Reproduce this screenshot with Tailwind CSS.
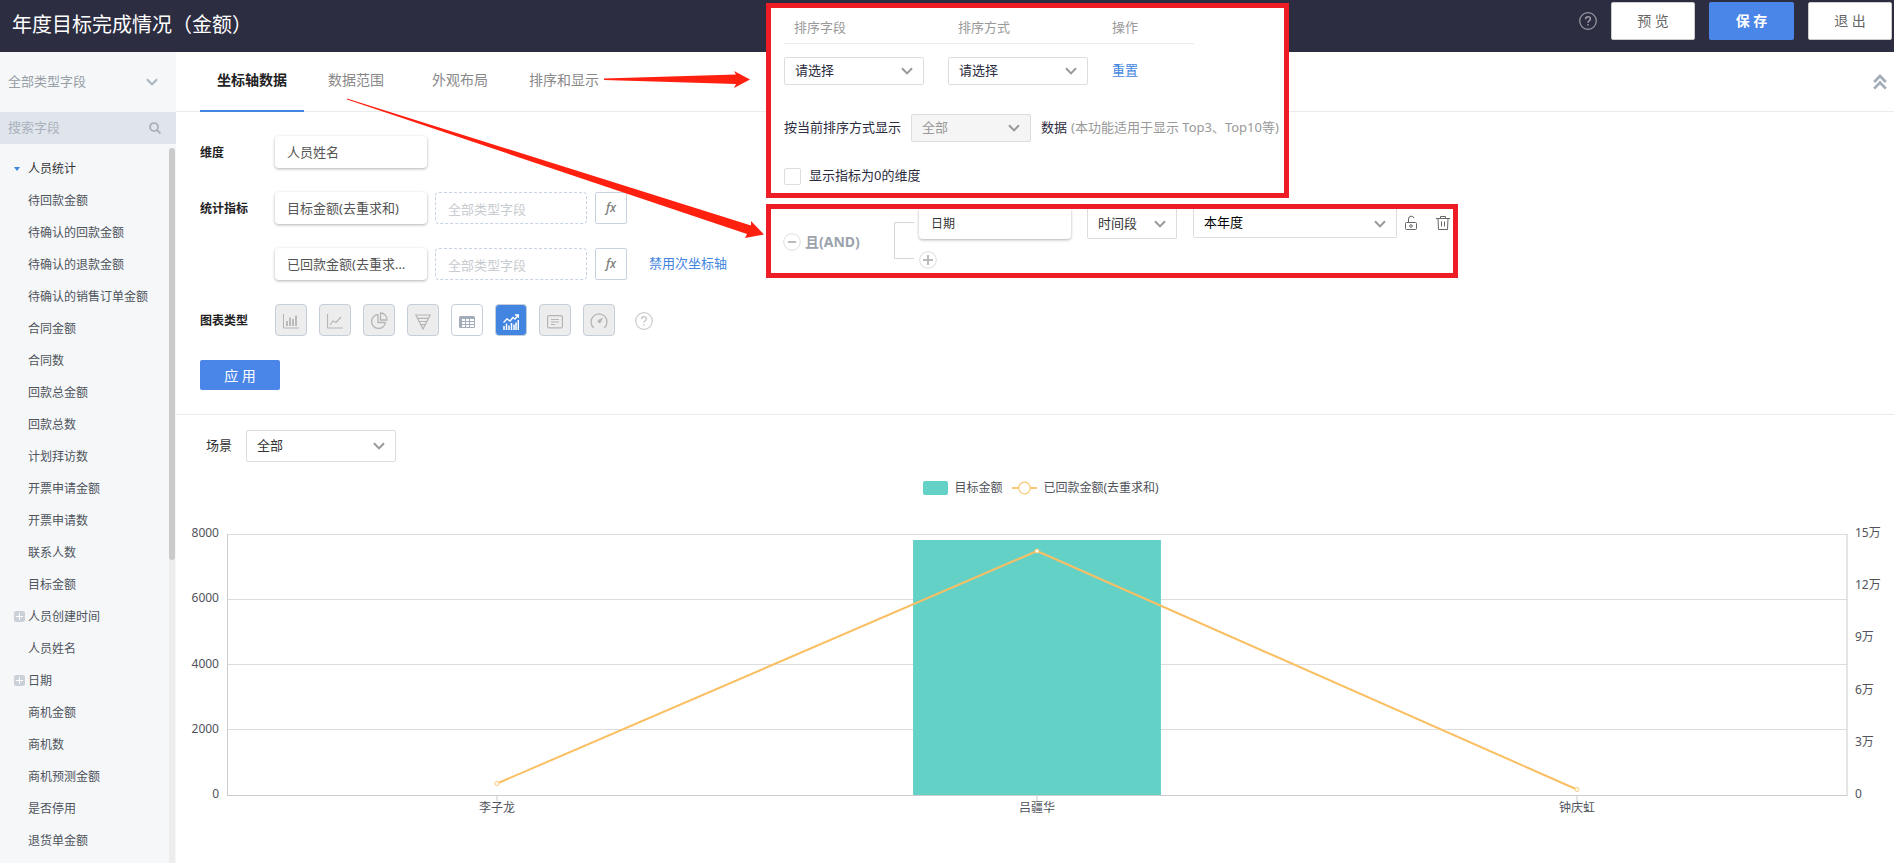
<!DOCTYPE html>
<html lang="zh-CN">
<head>
<meta charset="utf-8">
<title>年度目标完成情况（金额）</title>
<script src="https://cdn.jsdelivr.net/npm/@tailwindcss/browser@4"></script>
</head>
<body class="relative min-h-screen flex flex-col bg-white text-[#333] text-[13px] font-['Noto_Sans','Noto_Sans_CJK_SC',sans-serif]">
<svg class="hidden">
  <symbol id="chev" viewBox="0 0 12 8"><path d="M1 1.2 6 6.4 11 1.2" fill="none" stroke="currentColor" stroke-width="2"/></symbol>
  <symbol id="help" viewBox="0 0 18 18"><circle cx="9" cy="9" r="8.3" fill="none" stroke="currentColor" stroke-width="1.2"/><path d="M6.6 7.2C6.6 5.6 7.6 4.8 9 4.8s2.4.8 2.4 2.1c0 1.7-2.4 1.8-2.4 3.9M9 12v1.6" fill="none" stroke="currentColor" stroke-width="1.5"/></symbol>
</svg>

<header class="h-[52px] shrink-0 bg-[#2d2d41] flex items-start justify-between pl-3 pr-0.5">
  <h1 class="text-white text-xl leading-[48px]">年度目标完成情况<span lang="zh-TW" class="font-['Noto_Sans_CJK_TC',sans-serif]">（</span>金额<span lang="zh-TW" class="font-['Noto_Sans_CJK_TC',sans-serif]">）</span></h1>
  <div class="flex items-center pt-0.5 text-sm">
    <button aria-label="帮助" class="mr-3.5 text-[#9b9ba6]"><svg class="size-[18px]"><use href="#help"/></svg></button>
    <button class="w-[84px] h-[38px] rounded-xs bg-white border border-[#ccc] text-[#666] mr-3.5">预 览</button>
    <button class="w-[85px] h-[38px] rounded-xs bg-[#4a85e8] text-white font-bold mr-3.5">保 存</button>
    <button class="w-[84px] h-[38px] rounded-xs bg-white border border-[#ccc] text-[#666]">退 出</button>
  </div>
</header>

<div class="flex grow">
  <aside class="w-44 shrink-0 bg-[#f5f7f9] flex flex-col">
    <div class="relative h-[60px] flex items-center">
      <select aria-label="字段类型" class="appearance-none w-full h-full px-2 text-[#989ea6] bg-transparent"><option>全部类型字段</option></select>
      <svg class="absolute right-[18px] w-3 h-2 text-[#a9b2bb] pointer-events-none"><use href="#chev"/></svg>
    </div>
    <label class="h-8 bg-[#e0e5ec] flex items-center pl-2 pr-[15px]">
      <input type="search" aria-label="搜索字段" placeholder="搜索字段" class="min-w-0 grow bg-transparent placeholder:text-[#a9b2bd] outline-none">
      <svg class="size-3 shrink-0 text-[#a3aeb9]" viewBox="0 0 12 12"><circle cx="5" cy="5" r="4" fill="none" stroke="currentColor" stroke-width="1.7"/><path d="m8 8 3.4 3.4" stroke="currentColor" stroke-width="1.8"/></svg>
    </label>
    <div class="flex grow pt-1">
      <ul class="grow pt-[5px] text-xs leading-8 text-[#4f545c]">
        <li class="flex items-center pl-3.5 text-[#333]"><svg class="w-1.5 h-1 mr-2" viewBox="0 0 6 4"><path d="M0 0h6L3 4z" fill="#3d86e0"/></svg>人员统计</li>
        <li class="pl-7">待回款金额</li>
        <li class="pl-7">待确认的回款金额</li>
        <li class="pl-7">待确认的退款金额</li>
        <li class="pl-7">待确认的销售订单金额</li>
        <li class="pl-7">合同金额</li>
        <li class="pl-7">合同数</li>
        <li class="pl-7">回款总金额</li>
        <li class="pl-7">回款总数</li>
        <li class="pl-7">计划拜访数</li>
        <li class="pl-7">开票申请金额</li>
        <li class="pl-7">开票申请数</li>
        <li class="pl-7">联系人数</li>
        <li class="pl-7">目标金额</li>
        <li class="flex items-center pl-3.5"><svg class="size-[11px] mr-[3px] mb-px" viewBox="0 0 11 11"><rect width="11" height="11" rx="2" fill="#ccd1d9"/><path d="M2 5.5h7M5.5 2v7" stroke="#fff"/></svg>人员创建时间</li>
        <li class="pl-7">人员姓名</li>
        <li class="flex items-center pl-3.5"><svg class="size-[11px] mr-[3px] mb-px" viewBox="0 0 11 11"><rect width="11" height="11" rx="2" fill="#ccd1d9"/><path d="M2 5.5h7M5.5 2v7" stroke="#fff"/></svg>日期</li>
        <li class="pl-7">商机金额</li>
        <li class="pl-7">商机数</li>
        <li class="pl-7">商机预测金额</li>
        <li class="pl-7">是否停用</li>
        <li class="pl-7">退货单金额</li>
      </ul>
      <div class="w-1.5 mr-px bg-[#ededed] rounded-t-full"><div class="h-[412px] bg-[#cbcbcb] rounded-full"></div></div>
    </div>
  </aside>

  <main class="grow min-w-0 flex flex-col">
    <nav class="h-[60px] border-b border-[#ebebeb] flex items-start pl-6 pr-[7px] text-sm leading-[56px] text-center text-[#888]">
      <a href="#" class="w-[104px] h-[60px] border-b-2 border-[#4285e0] font-bold text-[#222]">坐标轴数据</a>
      <a href="#" class="w-[104px]">数据范围</a>
      <a href="#" class="w-[104px]">外观布局</a>
      <a href="#" class="w-[104px]">排序和显示</a>
      <button aria-label="收起" class="ml-auto h-[60px] text-[#a3adb8]"><svg class="w-3.5 h-4" viewBox="0 0 14 16"><path d="m1.2 8 5.8-6 5.8 6M1.2 14.6l5.8-6 5.8 6" fill="none" stroke="currentColor" stroke-width="2.8"/></svg></button>
    </nav>

    <section class="px-6 py-6 border-b border-[#ebebeb] flex flex-col gap-6">
      <div class="flex items-center h-8">
        <span class="w-[75px] pt-0.5 text-xs font-bold text-[#222]">维度</span>
        <div class="w-[152px] h-8 leading-8 px-3 rounded-sm bg-white text-[#555] shadow-[0_1px_3px_rgba(60,60,80,0.4)]">人员姓名</div>
      </div>
      <div class="flex items-center h-8 gap-2">
        <span class="w-[67px] pt-0.5 text-xs font-bold text-[#222]">统计指标</span>
        <div class="w-[152px] h-8 leading-8 px-3 rounded-sm bg-white text-[#555] truncate shadow-[0_1px_3px_rgba(60,60,80,0.4)]">目标金额(去重求和)</div>
        <div class="w-[152px] h-8 leading-8 px-3 rounded-sm border border-dashed border-[#c8d3e2] text-[#c8cbd0]">全部类型字段</div>
        <button class="size-8 rounded-xs border border-[#c8d3e2] text-[#777] text-xs italic font-medium leading-none font-['Noto_Sans',sans-serif]">fx</button>
      </div>
      <div class="flex items-center h-8 gap-2">
        <span class="w-[67px]"></span>
        <div class="w-[152px] h-8 leading-8 pl-3 pr-5 rounded-sm bg-white text-[#555] truncate shadow-[0_1px_3px_rgba(60,60,80,0.4)]">已回款金额(去重求和)</div>
        <div class="w-[152px] h-8 leading-8 px-3 rounded-sm border border-dashed border-[#c8d3e2] text-[#c8cbd0]">全部类型字段</div>
        <button class="size-8 rounded-xs border border-[#c8d3e2] text-[#777] text-xs italic font-medium leading-none font-['Noto_Sans',sans-serif]">fx</button>
        <a href="#" class="ml-3.5 text-[#4285e0]">禁用次坐标轴</a>
      </div>
      <div class="flex items-center h-8">
        <span class="w-[75px] pt-0.5 text-xs font-bold text-[#222]">图表类型</span>
        <div class="flex gap-3 text-[#b5b5b5] [&>button]:size-8 [&>button]:rounded-sm [&>button]:border [&>button]:border-[#c5ced9] [&>button]:flex [&>button]:items-center [&>button]:justify-center">
          <button aria-label="柱状图" class="bg-[#ededed]"><svg class="size-4 mt-0.5" viewBox="0 0 16 16"><path d="M.5 1v14H16" fill="none" stroke="currentColor"/><path d="M4 8v5M7 4.500v8.500M10 6v7M13 2.500V13" stroke="currentColor" stroke-width="1.800"/></svg></button>
          <button aria-label="折线图" class="bg-[#ededed]"><svg class="size-4 mt-0.5" viewBox="0 0 16 16"><path d="M.5 1v14H16M3 12l3-4 3 1.500L14 4" fill="none" stroke="currentColor" stroke-width="1.200"/></svg></button>
          <button aria-label="饼图" class="bg-[#ededed]"><svg class="size-[18px] mt-0.5" viewBox="0 0 18 18"><path d="M8 2.500a7 7 0 1 0 7.500 8M8 2.500v8h7.500M10.500 1v7H17a6.500 6.500 0 0 0-6.500-7z" fill="none" stroke="currentColor" stroke-width="1.300"/></svg></button>
          <button aria-label="漏斗图" class="bg-[#ededed]"><svg class="size-4 mt-1" viewBox="0 0 16 16"><path d="M.8 1h14.400L8 15zM2.500 4.300h11M4.200 7.500h7.600M6 10.700h4" fill="none" stroke="currentColor" stroke-width="1.200"/></svg></button>
          <button aria-label="表格" class="bg-white"><svg class="w-4 h-3 mt-1" viewBox="0 0 16 12"><rect width="16" height="12" rx="1.500" fill="#a3adba"/><path d="M3 3h3v2H3zM7 3h3v2H7zM11 3h4v2h-4zM3 6h3v2H3zM7 6h3v2H7zM11 6h4v2h-4zM3 9h3v2H3zM7 9h3v2H7zM11 9h4v2h-4z" fill="#fff"/></svg></button>
          <button aria-label="双轴图" class="bg-[#4285e0] text-white"><svg class="size-4 mt-1" viewBox="0 0 16 16"><path d="M.5 8.500 4 5l3 2 3-3.500 2 1.500 3-3.500M12 1h3.500v3" fill="none" stroke="currentColor" stroke-width="1.400"/><path d="M1 12v4M3.500 9.500V16M6 11.500V16M8.500 9V16M11 10.500V16M13 8.500V16M15.300 6V16" stroke="currentColor" stroke-width="1.500"/></svg></button>
          <button aria-label="数值图" class="bg-[#ededed]"><svg class="w-4 h-3.5 mt-1" viewBox="0 0 16 14"><rect x=".6" y=".6" width="14.800" height="12.300" rx="1.500" fill="none" stroke="currentColor" stroke-width="1.200"/><path d="M4 4.500h8M4 7h8M4 9.500h4" stroke="currentColor"/></svg></button>
          <button aria-label="仪表盘" class="bg-[#ededed]"><svg class="size-[18px] mt-0.5" viewBox="0 0 18 18"><path d="M3.800 16a8 8 0 1 1 10.400 0" fill="none" stroke="currentColor" stroke-width="1.300"/><path d="m13 5.500-2.200 5a1.800 1.800 0 0 1-2.600-2.600z" fill="currentColor"/></svg></button>
        </div>
        <button aria-label="帮助" class="ml-5 pt-0.5 text-[#ccc]"><svg class="size-[18px]"><use href="#help"/></svg></button>
      </div>
      <button class="w-20 h-[30px] pt-0.5 rounded-xs bg-[#4a85e8] text-white text-sm">应 用</button>
    </section>

    <section class="pt-[15px] pb-4">
      <div class="flex items-center pl-[30px]">
        <label for="scene">场景</label>
        <div class="relative ml-3.5 flex items-center">
          <select id="scene" class="appearance-none w-[150px] h-8 pl-2.5 border border-[#ddd] rounded-xs bg-white text-[#333]"><option>全部</option></select>
          <svg class="absolute right-[11px] w-3 h-2 text-[#999] pointer-events-none"><use href="#chev"/></svg>
        </div>
      </div>
      <div class="flex justify-center items-center mt-[18px] h-4 pl-3 text-xs text-[#50535c]">
        <span class="w-[25px] h-3.5 rounded-xs bg-[#64d1c7] mr-1.5"></span>目标金额
        <svg class="w-[25px] h-3.5 ml-2.5 mr-1.5" viewBox="0 0 25 14"><path d="M0 7h25" stroke="#fac976" stroke-width="2"/><circle cx="12.500" cy="7" r="5.800" fill="#fff" stroke="#fac976" stroke-width="1.300"/></svg>已回款金额(去重求和)
      </div>
      <div class="mt-[38px] pl-[51px] pr-[47px]">
        <svg class="block w-full h-[290px] overflow-visible text-xs fill-[#50535c]" role="img" aria-label="目标金额与已回款金额">
          <g stroke="#ddd"><line x1="0" x2="100%" y1=".5" y2=".5"/><line x1="0" x2="100%" y1="65.500" y2="65.500"/><line x1="0" x2="100%" y1="130.500" y2="130.500"/><line x1="0" x2="100%" y1="195.500" y2="195.500"/></g>
          <rect x="42.350%" width="15.300%" y="6" height="255" fill="#64d1c7"/>
          <g stroke="#ccc"><line x1=".5" x2=".5" y1="0" y2="262"/><line x1="100%" x2="100%" y1="0" y2="262"/><line x1="0" x2="100%" y1="261.500" y2="261.500"/><line x1="16.667%" x2="16.667%" y1="262" y2="267"/><line x1="50%" x2="50%" y1="262" y2="267"/><line x1="83.333%" x2="83.333%" y1="262" y2="267"/></g>
          <g stroke="#f9bf62" stroke-width="2"><line x1="16.667%" y1="249.500" x2="50%" y2="17"/><line x1="50%" y1="17" x2="83.333%" y2="255.500"/></g>
          <g stroke="#fac976" fill="#fff"><circle cx="16.667%" cy="249.500" r="2"/><circle cx="50%" cy="17" r="2"/><circle cx="83.333%" cy="255.500" r="2"/></g>
          <g text-anchor="end"><text x="-8" y="3">8000</text><text x="-8" y="68">6000</text><text x="-8" y="134">4000</text><text x="-8" y="199">2000</text><text x="-8" y="264">0</text></g>
          <svg x="100%" class="overflow-visible"><text x="8" y="3">15万</text><text x="8" y="55">12万</text><text x="8" y="107">9万</text><text x="8" y="160">6万</text><text x="8" y="212">3万</text><text x="8" y="264">0</text></svg>
          <g text-anchor="middle"><text x="16.667%" y="278">李子龙</text><text x="50%" y="278">吕疆华</text><text x="83.333%" y="278">钟庆虹</text></g>
        </svg>
      </div>
    </section>
  </main>
</div>

<!-- Callout: sorting tab -->
<div class="absolute left-[766px] top-[3px] w-[523px] h-[195px] border-[5px] border-[#ee1c25] bg-white pl-[13px] text-[#2b2b40]">
  <div class="w-[410px] h-9 border-b border-[#ebebeb] grid grid-cols-[164px_164px_1fr] items-center pt-1 text-[#999]"><span class="pl-2.5">排序字段</span><span class="pl-2.5">排序方式</span><span>操作</span></div>
  <div class="w-[410px] mt-[13px] grid grid-cols-[164px_164px_1fr] items-center">
    <div class="relative w-[140px] flex items-center">
      <select aria-label="排序字段" class="appearance-none w-full h-7 pl-2.5 border border-[#ddd] rounded-xs bg-white"><option>请选择</option></select>
      <svg class="absolute right-[11px] w-3 h-2 text-[#999] pointer-events-none"><use href="#chev"/></svg>
    </div>
    <div class="relative w-[140px] flex items-center">
      <select aria-label="排序方式" class="appearance-none w-full h-7 pl-2.5 border border-[#ddd] rounded-xs bg-white"><option>请选择</option></select>
      <svg class="absolute right-[11px] w-3 h-2 text-[#999] pointer-events-none"><use href="#chev"/></svg>
    </div>
    <a href="#" class="text-[#4285e0]">重置</a>
  </div>
  <div class="mt-[29px] flex items-center whitespace-nowrap">
    <label for="topn">按当前排序方式显示</label>
    <div class="relative w-[120px] mx-2.5 flex items-center">
      <select id="topn" class="appearance-none w-full h-7 pl-2.5 border border-[#ddd] rounded-xs bg-[#f5f5f5] text-[#999]"><option>全部</option></select>
      <svg class="absolute right-[11px] w-3 h-2 text-[#999] pointer-events-none"><use href="#chev"/></svg>
    </div>
    数据<span class="ml-1 text-[#999]">(本功能适用于显示 Top3、Top10等)</span>
  </div>
  <label class="mt-6 flex items-center"><input type="checkbox" class="appearance-none size-[17px] mt-0.5 mr-2 border border-[#ddd] rounded-xs bg-white">显示指标为0的维度</label>
</div>

<!-- Callout: data range tab -->
<div class="absolute left-[766px] top-[204px] w-[692px] h-[74px] border-[5px] border-[#ee1c25] bg-white pl-3 overflow-hidden flex items-start text-[#333]">
  <button class="flex items-center w-[111px] h-[66px] text-sm font-bold text-[#9ba2ac]"><svg class="size-[18px] mr-1" viewBox="0 0 18 18"><circle cx="9" cy="9" r="8.300" fill="#fff" stroke="#ddd"/><path d="M5 9h8" stroke="#bbb" stroke-width="2"/></svg>且(AND)</button>
  <div class="w-5 h-[37px] mt-[13px] border border-r-0 border-[#d5d5d5] rounded-l-xs"></div>
  <div class="ml-[5px] w-[152px] shrink-0 flex flex-col items-start">
    <div class="w-full h-[30px] leading-[30px] px-3 text-xs rounded-b-sm shadow-[0_1px_3px_rgba(60,60,80,0.4)]">日期</div>
    <button aria-label="添加条件" class="mt-3"><svg class="size-[18px]" viewBox="0 0 18 18"><circle cx="9" cy="9" r="8.300" fill="#fff" stroke="#ddd"/><path d="M4 9h10M9 4v10" stroke="#bbb" stroke-width="2"/></svg></button>
  </div>
  <div class="relative ml-4 w-[90px] shrink-0 flex items-center">
    <select aria-label="条件" class="appearance-none w-full h-[30px] pl-2.5 border border-t-0 border-[#ddd] rounded-b-xs bg-white"><option>时间段</option></select>
    <svg class="absolute right-[11px] w-3 h-2 text-[#999] pointer-events-none"><use href="#chev"/></svg>
  </div>
  <div class="relative ml-4 w-[204px] shrink-0 flex items-center text-black">
    <select aria-label="时间范围" class="appearance-none w-full h-[29px] pl-2.5 border border-t-0 border-[#ddd] rounded-b-xs bg-white"><option>本年度</option></select>
    <svg class="absolute right-[11px] w-3 h-2 text-[#999] pointer-events-none"><use href="#chev"/></svg>
  </div>
  <button aria-label="锁定" class="ml-[7px] mt-1.5 text-[#666]"><svg class="w-3.5 h-4" viewBox="0 0 14 16"><path d="M2.500 7.500h9a1 1 0 0 1 1 1v5a1 1 0 0 1-1 1h-9a1 1 0 0 1-1-1v-5a1 1 0 0 1 1-1zM4.500 7.500V4a2.800 2.800 0 0 1 5.500-.8" fill="none" stroke="currentColor"/><circle cx="7" cy="11" r="1.300" fill="none" stroke="currentColor"/></svg></button>
  <button aria-label="删除" class="ml-[18px] mt-1.5 text-[#666]"><svg class="w-3.5 h-4" viewBox="0 0 14 16"><path d="M0 3.500h14M4.500 3.500v-2h5v2M2 3.500l.5 11h9l.5-11M5.500 6.500v5M8.500 6.500v5" fill="none" stroke="currentColor"/></svg></button>
</div>

<!-- Arrows from the tabs to their callouts -->
<svg class="absolute left-0 top-0 w-[770px] h-[280px] pointer-events-none" viewBox="0 0 770 280" fill="#ff2010">
  <path d="M604 78.500 736 74.500 734 71 750 79.500 734 88 736 84 604 80z"/>
  <path d="M347 98.500 751 225.500 751 221 764 234.500 745 238 747 234 347 99.500z"/>
</svg>
</body>
</html>
